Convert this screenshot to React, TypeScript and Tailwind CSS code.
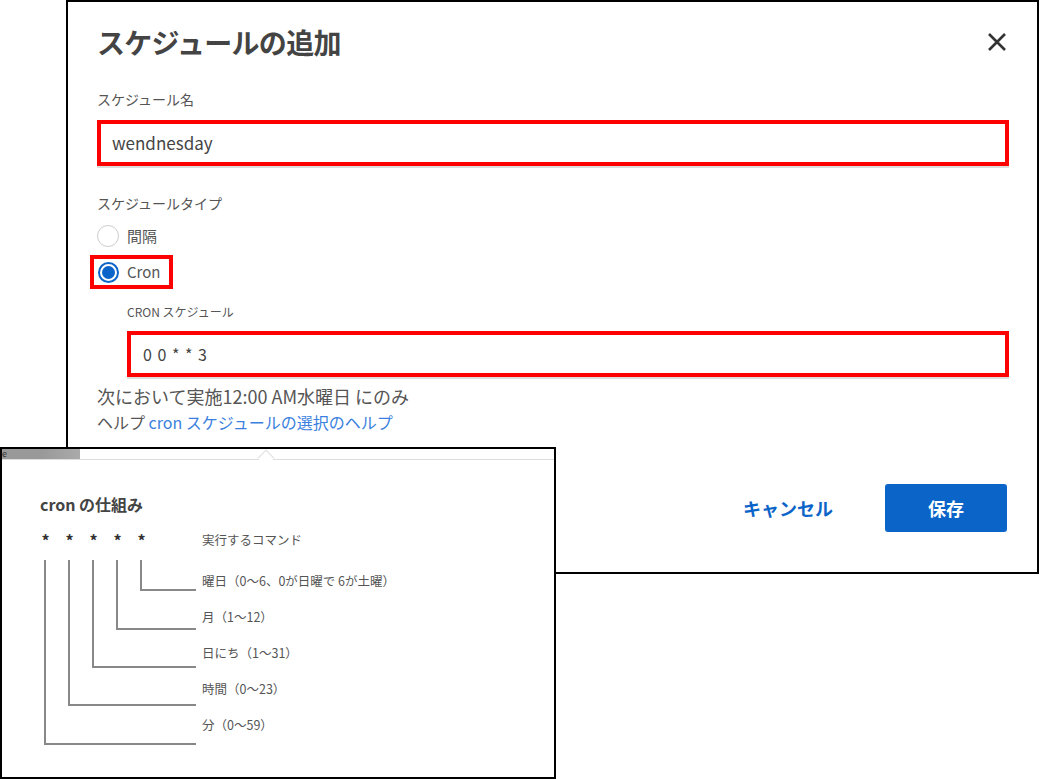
import React from "react";

const F = { fontFamily: '"Noto Sans CJK JP", "Noto Sans", sans-serif' };

export default function App() {
  const rows: [string, number][] = [
    ["実行するコマンド", 12],
    ["曜日（0～6、0が日曜で 6が土曜）", 53],
    ["月（1～12）", 89],
    ["日にち（1～31）", 125],
    ["時間（0～23）", 161],
    ["分（0～59）", 197],
  ];
  return (
    <div className="relative w-[1040px] h-[779px] bg-white overflow-hidden" style={F}>
      {/* Dialog */}
      <div className="absolute left-[66px] top-0 w-[973px] h-[574px] border-2 border-black bg-white">
        <div className="pl-[29px] pr-[30px]">
          <div className="flex items-center justify-between h-[80px]">
            <h1 className="text-[28px] font-bold text-[#444] tracking-tight">スケジュールの追加</h1>
            <svg width="20" height="20" viewBox="0 0 20 20">
              <path d="M2 2L18 18M18 2L2 18" stroke="#333" strokeWidth="2.6" />
            </svg>
          </div>
          <div className="text-[14px] text-[#555] mt-[7px]">スケジュール名</div>
          <div className="mt-[10px] w-[912px] border-b-2 border-[#ddd]">
            <div className="h-[46px] border-4 border-[#ff0000] flex items-center pl-[11px] text-[17px] text-[#444]">
              wendnesday
            </div>
          </div>
          <div className="text-[14px] text-[#555] mt-[25px]">スケジュールタイプ</div>
          <div className="flex items-center gap-[8px] mt-[11px] h-[22px]">
            <div className="w-[22px] h-[22px] rounded-full border border-[#ccc]" />
            <span className="text-[15px] text-[#555]">間隔</span>
          </div>
          <div className="-ml-[7px] mt-[8px] w-[83px] h-[34px] border-4 border-[#ff0000] flex items-center pl-[4px] gap-[8px]">
            <div className="w-[21px] h-[21px] rounded-full border-2 border-[#0b64c8] flex items-center justify-center">
              <div className="w-[13px] h-[13px] rounded-full bg-[#0b64c8]" />
            </div>
            <span className="text-[15px] text-[#555]">Cron</span>
          </div>
          <div className="pl-[30px]">
            <div className="text-[12px] text-[#555] mt-[14px]">CRON スケジュール</div>
            <div className="mt-[10px] w-[882px] border-b-2 border-[#ddd]">
              <div className="h-[46px] border-4 border-[#ff0000] flex items-center pl-[12px] text-[16px] text-[#444] tracking-[1px]">
                0 0 * * 3
              </div>
            </div>
          </div>
          <div className="text-[18px] text-[#555] mt-[4px]">次において実施12:00 AM水曜日 にのみ</div>
          <div className="text-[16px] text-[#555] mt-[0px]">
            ヘルプ <span className="text-[#3b7fe0]">cron スケジュールの選択のヘルプ</span>
          </div>
          <div className="flex justify-end items-center mt-[50px] gap-[52px]">
            <span className="text-[18px] font-bold text-[#0b64c8]">キャンセル</span>
            <div className="w-[122px] h-[48px] bg-[#0b64c8] rounded-[3px] flex items-center justify-center text-white text-[18px] font-bold">
              保存
            </div>
          </div>
        </div>
      </div>

      {/* Popover */}
      <div className="absolute left-0 top-[447px] w-[556px] h-[332px] border-2 border-black bg-white">
        <div className="relative h-[11px] border-b border-[#ddd]">
          <div className="absolute left-0 top-0 w-[78px] h-[10px] bg-gradient-to-r from-[#999] via-[#999] to-[#aaa] text-[9px] leading-[10px] text-[#333]">e</div>
          <div className="absolute left-[258px] top-[3px] w-[12px] h-[12px] rotate-45 bg-white border-l border-t border-[#ddd]" />
        </div>
        <div className="pl-[38px] pt-[34px]">
          <div className="text-[16px] font-bold text-[#444] leading-[20px]">cron の仕組み</div>
          <div className="relative mt-[14px] h-[225px]">
            <div className="absolute left-0 top-[2px] flex gap-[13px] text-[16px] font-bold text-[#333] leading-[20px]">
              {[0, 1, 2, 3, 4].map((i) => (
                <span key={i} className="w-[11px] text-center">*</span>
              ))}
            </div>
            <svg width="170" height="225" className="absolute left-0 top-0">
              {[
                [5, 216],
                [29, 177],
                [53, 139],
                [77, 101],
                [101, 62],
              ].map(([x, y], i) => (
                <path key={i} d={`M${x} 32 V${y} H156`} stroke="#888" strokeWidth="2" fill="none" />
              ))}
            </svg>
            {rows.map(([r, y], i) => (
              <div key={i} className="absolute left-[162px] text-[12.5px] leading-[16px] text-[#555] whitespace-nowrap" style={{ top: y - 8 }}>
                {r}
              </div>
            ))}
          </div>
        </div>
      </div>
    </div>
  );
}
